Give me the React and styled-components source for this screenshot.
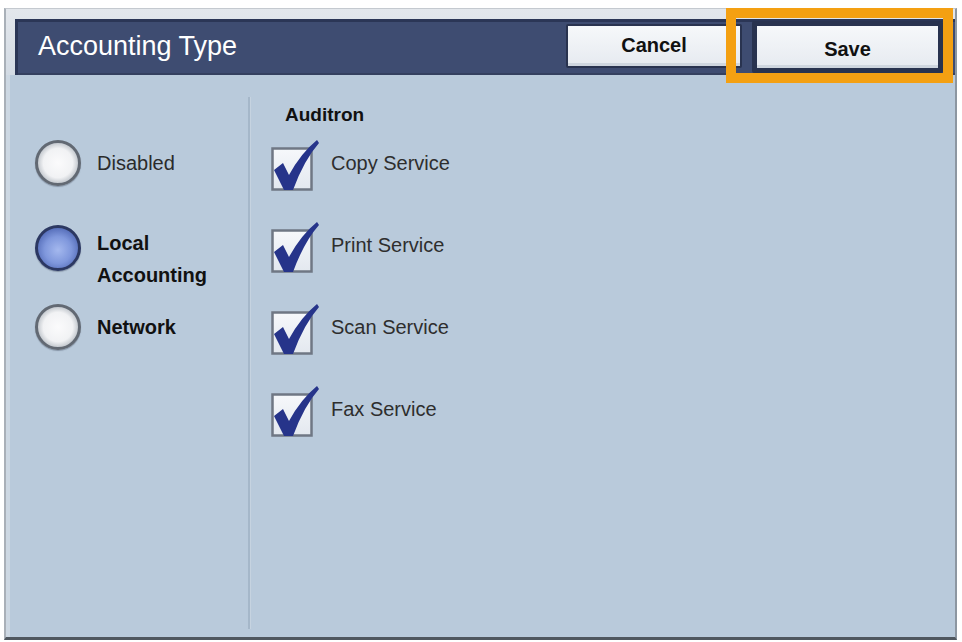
import React from "react";
import styled, { createGlobalStyle } from "styled-components";

const GlobalStyle = createGlobalStyle`
  html, body {
    margin: 0;
    padding: 0;
    background: #ffffff;
  }
  body {
    font-family: "Liberation Sans", Arial, sans-serif;
  }
`;

const modes = [
  { id: "disabled", label: ["Disabled"], selected: false, bold: false, height: 85, pad: 7 },
  { id: "local", label: ["Local", "Accounting"], selected: true, bold: true, height: 79, pad: 2 },
  { id: "network", label: ["Network"], selected: false, bold: true, height: 46, pad: 7 },
];

const services = ["Copy Service", "Print Service", "Scan Service", "Fax Service"];

// Ticked box, the tick runs past the top-right corner of the box
function CheckIcon() {
  return (
    <svg width="50" height="52" viewBox="0 0 50 52">
      <defs>
        <linearGradient id="boxFill" x1="0" y1="0" x2="0" y2="1">
          <stop offset="0" stopColor="#f6f8fb" />
          <stop offset="1" stopColor="#e3e8ef" />
        </linearGradient>
      </defs>
      <rect x="1.5" y="8.5" width="39" height="41" fill="url(#boxFill)" stroke="#6f7784" strokeWidth="2.5" />
      <path
        d="M3 30 L12 23 L18 35 Q30 13 46 0 L48 3 Q33 20 22 50 L13 50 Z"
        fill="#26348a"
      />
    </svg>
  );
}

export default function App() {
  return (
    <>
      <GlobalStyle />
      <Frame>
        <Header>
          <TitleBar>
            <Title>Accounting Type</Title>
            <ActionButton>Cancel</ActionButton>
            <ActionButton $primary>Save</ActionButton>
          </TitleBar>
        </Header>

        <Body>
          <RadioColumn>
            {modes.map((m) => (
              <RadioRow key={m.id} $h={m.height}>
                <Radio $on={m.selected} />
                <RadioLabel $bold={m.bold} $pad={m.pad}>
                  {m.label.map((line) => (
                    <div key={line}>{line}</div>
                  ))}
                </RadioLabel>
              </RadioRow>
            ))}
          </RadioColumn>

          <Divider />

          <ServiceColumn>
            <GroupTitle>Auditron</GroupTitle>
            <ServiceList>
              {services.map((s) => (
                <ServiceRow key={s}>
                  <CheckIcon />
                  <ServiceLabel>{s}</ServiceLabel>
                </ServiceRow>
              ))}
            </ServiceList>
          </ServiceColumn>
        </Body>

        <Highlight />
      </Frame>
    </>
  );
}

// Styles
const Frame = styled.div`
  position: relative;
  box-sizing: border-box;
  margin: 8px 0 0 4px;
  width: 953px;
  height: 632px;
  display: flex;
  flex-direction: column;
  border-top: 1px solid #c4c9cf;
  border-left: 2px solid #a9b0b8;
  border-right: 2px solid #8c96a1;
  border-bottom: 3px solid #4f575f;
  background: #b9cadb;
`;

const Header = styled.div`
  padding: 10px 0 0 9px;
  background: linear-gradient(#e3e7ec, #d3dbe4);
`;

const TitleBar = styled.div`
  height: 56px;
  display: flex;
  align-items: center;
  gap: 10px;
  padding: 0 12px 0 23px;
  background: #3e4c71;
  box-shadow: inset 3px 3px 0 #2b3656, inset 0 -2px 0 #34405f;
`;

const Title = styled.div`
  flex: 1;
  color: #ffffff;
  font-size: 27px;
  line-height: 30px;
  margin-bottom: 2px;
`;

const ActionButton = styled.button`
  box-sizing: border-box;
  width: ${(p) => (p.$primary ? "191px" : "176px")};
  height: ${(p) => (p.$primary ? "52px" : "44px")};
  margin-top: ${(p) => (p.$primary ? "0" : "-2px")};
  padding: ${(p) => (p.$primary ? "4px 0 0" : "0 0 2px")};
  border: ${(p) => (p.$primary ? "5px" : "2px")} solid #29334f;
  border-radius: 2px;
  background: linear-gradient(#f6f8fa, #e6eaf0);
  box-shadow: inset 0 -3px 0 #cfd6df;
  color: #111111;
  font-family: "Liberation Sans", Arial, sans-serif;
  font-weight: bold;
  font-size: 20px;
`;

const Body = styled.div`
  flex: 1;
  display: flex;
  box-shadow: inset 4px 0 0 #cdd8e3;
`;

const RadioColumn = styled.div`
  width: 242px;
  box-sizing: border-box;
  padding: 65px 0 0 29px;
  display: flex;
  flex-direction: column;
`;

const RadioRow = styled.div`
  height: ${(p) => p.$h}px;
  display: flex;
  align-items: flex-start;
  gap: 16px;
`;

const Radio = styled.div`
  flex: none;
  width: 46px;
  height: 46px;
  box-sizing: border-box;
  border-radius: 50%;
  border: 3px solid ${(p) => (p.$on ? "#2c3862" : "#626973")};
  background: ${(p) =>
    p.$on
      ? "radial-gradient(circle at 50% 55%, #a4b8ee 0%, #7f97dc 45%, #5a72bd 72%, #34447c 100%)"
      : "radial-gradient(circle at 50% 50%, #fbfbfc 0%, #f1f2f4 52%, #c3c8ce 72%, #7f868f 100%)"};
  box-shadow: 0 1px 1px rgba(40, 50, 70, 0.35);
`;

const RadioLabel = styled.div`
  padding-top: ${(p) => p.$pad}px;
  font-size: 20px;
  line-height: 32px;
  font-weight: ${(p) => (p.$bold ? "bold" : "normal")};
  color: ${(p) => (p.$bold ? "#111111" : "#2b2b2b")};
`;

const Divider = styled.div`
  width: 2px;
  margin: 22px 0 8px;
  background: #a5b7c9;
  box-shadow: 1px 0 0 #c6d3e0;
`;

const ServiceColumn = styled.div`
  flex: 1;
  padding: 29px 0 0 21px;
`;

const GroupTitle = styled.div`
  padding-left: 14px;
  font-size: 19px;
  line-height: 22px;
  font-weight: bold;
  color: #111111;
`;

const ServiceList = styled.div`
  margin-top: 14px;
  display: flex;
  flex-direction: column;
`;

const ServiceRow = styled.div`
  height: 82px;
  display: flex;
  align-items: flex-start;
  gap: 10px;
`;

const ServiceLabel = styled.div`
  padding-top: 11px;
  font-size: 20px;
  line-height: 24px;
  color: #2e2e2e;
`;

// Orange focus ring laid over the Save button
const Highlight = styled.div`
  position: absolute;
  top: -1px;
  left: 720px;
  width: 227px;
  height: 75px;
  box-sizing: border-box;
  border: 10px solid #f4a012;
  pointer-events: none;
`;
